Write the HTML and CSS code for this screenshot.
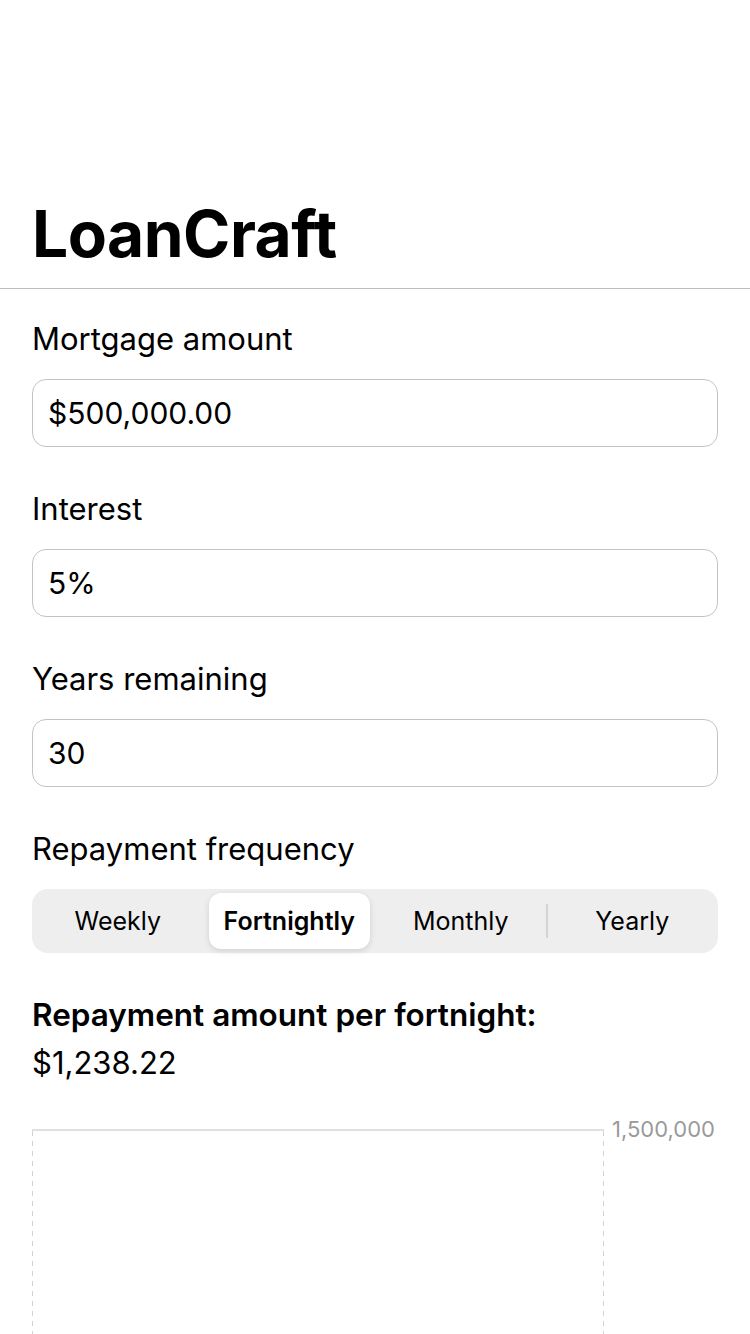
FILE: index.html
```html
<!DOCTYPE html>
<html>
<head>
<meta charset="utf-8">
<link rel="stylesheet" href="styles.css">
</head>
<body>
<header class="header">
  <h1 class="title">LoanCraft</h1>
</header>
<main class="form">
  <div class="field">
    <label class="label">Mortgage amount</label>
    <div class="input">$500,000.00</div>
  </div>
  <div class="field">
    <label class="label">Interest</label>
    <div class="input">5%</div>
  </div>
  <div class="field">
    <label class="label">Years remaining</label>
    <div class="input">30</div>
  </div>
  <div class="field">
    <label class="label">Repayment frequency</label>
    <div class="segmented">
      <div class="seg">Weekly</div>
      <div class="seg seg-active">Fortnightly</div>
      <div class="seg">Monthly</div>
      <div class="seg-divider"></div>
      <div class="seg">Yearly</div>
    </div>
  </div>
  <div class="result">
    <div class="result-title">Repayment amount per fortnight:</div>
    <div class="result-value">$1,238.22</div>
  </div>
  <div class="chart">
    <div class="plot"></div>
    <div class="axis">1,500,000</div>
  </div>
</main>
</body>
</html>
```
FILE: styles.css
```css
html, body {
  margin: 0;
  padding: 0;
  background: #fff;
  font-family: Inter, "Noto Sans", sans-serif;
  color: #000;
}
.header {
  padding: 196px 32px 0;
  height: 92px;
  border-bottom: 1px solid #bcbcbc;
  box-sizing: content-box;
}
.title {
  margin: 0;
  font-size: 64px;
  font-weight: 700;
  line-height: 76px;
  letter-spacing: -0.5px;
}
.form {
  padding: 0 32px;
}
.field {
  display: flex;
  flex-direction: column;
}
.field + .field {
  margin-top: 12px;
}
.label {
  font-size: 31px;
  line-height: 36px;
  margin-top: 32px;
  margin-bottom: 22px;
}
.input {
  height: 68px;
  box-sizing: border-box;
  border: 1px solid #c3c3c3;
  border-radius: 14px;
  padding: 0 15px;
  display: flex;
  align-items: center;
  font-size: 30px;
}
.segmented {
  display: flex;
  align-items: stretch;
  height: 64px;
  background: #eeeeef;
  border-radius: 16px;
  box-sizing: border-box;
}
.seg {
  flex: 1 1 0;
  margin: 4px 5px;
  display: flex;
  align-items: center;
  justify-content: center;
  font-size: 25px;
  font-weight: 400;
  border-radius: 12px;
}
.seg-active {
  background: #fff;
  font-weight: 600;
  box-shadow: 0 2px 6px rgba(0,0,0,0.12), 0 0 1px rgba(0,0,0,0.06);
}
.seg-divider {
  width: 2px;
  margin: 15px -1px;
  background: #d4d4d6;
}
.result {
  margin-top: 42px;
}
.result-title {
  font-size: 31.5px;
  font-weight: 600;
  line-height: 40px;
}
.result-value {
  font-size: 31px;
  line-height: 56px;
}
.chart {
  margin-top: 38px;
  display: flex;
  height: 230px;
}
.plot {
  width: 572px;
  border-top: 2px solid #e0e0e0;
  background:
    repeating-linear-gradient(to bottom, #d2d2d2 0 5px, transparent 5px 10px) left top / 1px 100% no-repeat,
    repeating-linear-gradient(to bottom, #d2d2d2 0 5px, transparent 5px 10px) right top / 1px 100% no-repeat;
}
.axis {
  margin-left: 8px;
  margin-top: -13px;
  font-size: 22px;
  color: #9a9a9a;
}
```
